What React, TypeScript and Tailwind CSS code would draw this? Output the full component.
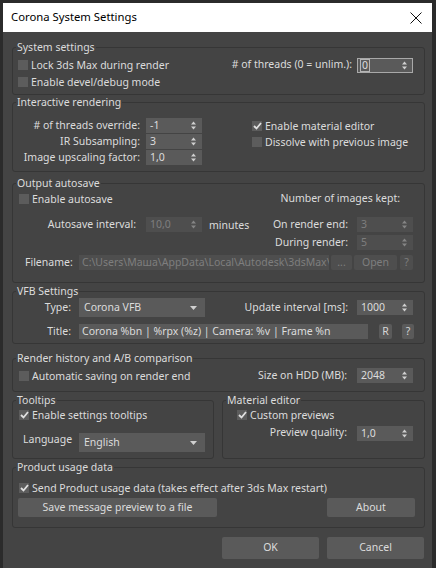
import type { ReactNode } from 'react'

const FONT = "font-['Noto_Sans','Open_Sans',sans-serif]"

function Spinner({ dim }: { dim?: boolean }) {
  const c = dim ? '#858585' : '#d0d0d0'
  return (
    <svg width="5" height="9" viewBox="0 0 5 9" className="shrink-0">
      <path d="M2.5 0.5 L5 3.5 L0 3.5 Z" fill={c} />
      <path d="M0 5.5 L5 5.5 L2.5 8.5 Z" fill={c} />
    </svg>
  )
}

function SpinBox({ value, disabled, focused }: { value: string; disabled?: boolean; focused?: boolean }) {
  return (
    <div
      className={`w-[56px] h-[15px] flex items-center justify-between shrink-0 ${
        disabled ? 'bg-[#4e4e4e] text-[#7e7e7e]' : 'bg-[#5a5a5a] text-[#dcdcdc]'
      } ${focused ? 'border border-[#a9a9a9] pl-[2px] pr-[5px]' : 'pl-[4px] pr-[6px]'}`}
    >
      {focused ? (
        <span className="border border-[#b5b5b5] leading-[11px] px-[1px] h-[13px]">{value}</span>
      ) : (
        <span className="leading-[15px]">{value}</span>
      )}
      <Spinner dim={disabled} />
    </div>
  )
}

function Dropdown({ value }: { value: string }) {
  return (
    <div className="w-[126px] h-[19px] bg-[#5a5a5a] flex items-center justify-between pl-[5px] pr-[8px] shrink-0">
      <span className="leading-[19px] text-[#dcdcdc]">{value}</span>
      <svg width="7" height="4" viewBox="0 0 7 4">
        <path d="M0 0 L7 0 L3.5 4 Z" fill="#d0d0d0" />
      </svg>
    </div>
  )
}

function Check({ checked, label, className = '' }: { checked?: boolean; label: string; className?: string }) {
  return (
    <div className={`flex items-center h-[16px] ${className}`}>
      <div className="w-[10px] h-[10px] bg-[#5c5c5c] flex items-center justify-center shrink-0">
        {checked && (
          <svg width="9" height="8" viewBox="0 0 9 8">
            <path d="M1 4 L3.5 6.5 L8 1" stroke="#e0e0e0" strokeWidth="1.8" fill="none" />
          </svg>
        )}
      </div>
      <span className="ml-[3px] leading-[16px] whitespace-nowrap">{label}</span>
    </div>
  )
}

function Group({ title, className = '', children }: { title: string; className?: string; children: ReactNode }) {
  return (
    <fieldset className={`border border-[#363636] rounded-[3px] ${className}`}>
      <legend className="ml-[3px] px-[1px] leading-[14px] h-[14px] whitespace-nowrap">{title}</legend>
      {children}
    </fieldset>
  )
}

function SmallBtn({ children, w, disabled }: { children: ReactNode; w: string; disabled?: boolean }) {
  return (
    <div
      className={`${w} h-[15px] rounded-[2px] flex items-center justify-center shrink-0 leading-[15px] ${
        disabled ? 'bg-[#4e4e4e] text-[#7e7e7e]' : 'bg-[#5a5a5a] text-[#d6d6d6]'
      }`}
    >
      {children}
    </div>
  )
}

export default function App() {
  return (
    <div className={`w-[436px] h-[568px] bg-[#2b2b2b] pt-[3px] pl-[3px] overflow-hidden ${FONT} text-[10.5px] text-[#dcdcdc]`}>
      <div className="w-[429px] h-[565px] bg-[#444444] flex flex-col">
        {/* title bar */}
        <div className="h-[29px] bg-white flex items-center justify-between pl-[8px] pr-[10px] shrink-0">
          <span className="text-[11.3px] text-black">Corona System Settings</span>
          <svg width="12" height="12" viewBox="0 0 12 12">
            <path d="M0.5 0.5 L11.5 11.5 M11.5 0.5 L0.5 11.5" stroke="#111" strokeWidth="1" />
          </svg>
        </div>

        <div className="pl-[9px] pr-[7px] flex flex-col">
          {/* System settings */}
          <Group title="System settings" className="mt-[8px] h-[55px]">
            <div className="flex items-center h-[16px] mt-[3px] pl-[5px] pr-[11px]">
              <Check label="Lock 3ds Max during render" />
              <span className="ml-auto mr-[5px] whitespace-nowrap"># of threads (0 = unlim.):</span>
              <SpinBox value="0" focused />
            </div>
            <Check label="Enable devel/debug mode" className="mt-[1px] pl-[5px]" />
          </Group>

          {/* Interactive rendering */}
          <Group title="Interactive rendering" className="h-[77px]">
            <div className="flex mt-[9px]">
              <div className="flex flex-col gap-[1px]">
                {[
                  ['# of threads override:', '-1'],
                  ['IR Subsampling:', '3'],
                  ['Image upscaling factor:', '1,0'],
                ].map(([l, v]) => (
                  <div key={l} className="flex items-center h-[15px]">
                    <span className="w-[127px] text-right whitespace-nowrap">{l}</span>
                    <div className="ml-[6px]">
                      <SpinBox value={v} />
                    </div>
                  </div>
                ))}
              </div>
              <div className="ml-[50px] flex flex-col">
                <Check checked label="Enable material editor" />
                <Check label="Dissolve with previous image" />
              </div>
            </div>
          </Group>

          {/* Output autosave */}
          <Group title="Output autosave" className="mt-[4px] h-[107px]">
            <div className="flex items-center mt-[1px] pl-[6px] pr-[24px]">
              <Check label="Enable autosave" />
              <span className="ml-auto">Number of images kept:</span>
            </div>
            <div className="flex items-center h-[15px] mt-[10px] pr-[11px]">
              <span className="w-[123px] text-right">Autosave interval:</span>
              <div className="ml-[10px]">
                <SpinBox value="10,0" disabled />
              </div>
              <span className="ml-[7px] pt-[3px]">minutes</span>
              <span className="ml-auto mr-[9px]">On render end:</span>
              <SpinBox value="3" disabled />
            </div>
            <div className="flex items-center justify-end h-[15px] mt-[3px] pr-[11px]">
              <span className="mr-[9px]">During render:</span>
              <SpinBox value="5" disabled />
            </div>
            <div className="flex items-center h-[15px] mt-[5px] pl-[12px]">
              <span className="w-[54px]">Filename:</span>
              <div className="w-[250px] h-[15px] bg-[#4e4e4e] text-[#7e7e7e] pl-[3px] leading-[15px] overflow-hidden whitespace-nowrap shrink-0">
                C:\Users\Маша\AppData\Local\Autodesk\3dsMax\2
              </div>
              <div className="ml-[2px]">
                <SmallBtn w="w-[21px]" disabled>...</SmallBtn>
              </div>
              <div className="ml-[2px]">
                <SmallBtn w="w-[43px]" disabled>Open</SmallBtn>
              </div>
              <div className="ml-[3px]">
                <SmallBtn w="w-[13px]" disabled>?</SmallBtn>
              </div>
            </div>
          </Group>

          {/* VFB Settings */}
          <Group title="VFB Settings" className="mt-[1px] h-[60px]">
            <div className="flex items-center h-[19px] pr-[11px]">
              <span className="w-[58px] text-right">Type:</span>
              <div className="ml-[8px]">
                <Dropdown value="Corona VFB" />
              </div>
              <span className="ml-auto mr-[9px]">Update interval [ms]:</span>
              <SpinBox value="1000" />
            </div>
            <div className="flex items-center h-[15px] mt-[7px]">
              <span className="w-[58px] text-right">Title:</span>
              <div className="ml-[8px] w-[289px] h-[15px] bg-[#5a5a5a] pl-[3px] leading-[15px] whitespace-nowrap overflow-hidden shrink-0">
                Corona %bn | %rpx (%z) | Camera: %v | Frame %n
              </div>
              <div className="ml-[11px]">
                <SmallBtn w="w-[13px]">R</SmallBtn>
              </div>
              <div className="ml-[10px]">
                <SmallBtn w="w-[12px]">?</SmallBtn>
              </div>
            </div>
          </Group>

          {/* Render history */}
          <Group title="Render history and A/B comparison" className="mt-[7px] h-[41px]">
            <div className="flex items-center h-[15px] mt-[3px] pl-[6px] pr-[11px]">
              <Check label="Automatic saving on render end" />
              <span className="ml-auto mr-[10px]">Size on HDD (MB):</span>
              <SpinBox value="2048" />
            </div>
          </Group>

          {/* Tooltips + Material editor */}
          <div className="flex gap-[8px] mt-[1px]">
            <Group title="Tooltips" className="w-[202px] h-[66px]">
              <Check checked label="Enable settings tooltips" className="pl-[6px]" />
              <div className="flex items-center h-[19px] mt-[10px] pl-[10px]">
                <span className="w-[56px] -mt-[5px]">Language</span>
                <Dropdown value="English" />
              </div>
            </Group>
            <Group title="Material editor" className="w-[203px] h-[66px]">
              <Check checked label="Custom previews" className="pl-[14px]" />
              <div className="flex items-center justify-end h-[14px] mt-[3px] pr-[11px]">
                <span className="mr-[10px]">Preview quality:</span>
                <SpinBox value="1,0" />
              </div>
            </Group>
          </div>

          {/* Product usage data */}
          <Group title="Product usage data" className="mt-[1px] h-[68px]">
            <Check checked label="Send Product usage data (takes effect after 3ds Max restart)" className="mt-[6px] pl-[6px]" />
            <div className="flex items-center mt-[2px] pl-[5px] pr-[9px]">
              <div className="w-[199px] h-[19px] bg-[#5a5a5a] rounded-[2px] flex items-center justify-center">
                Save message preview to a file
              </div>
              <div className="ml-auto w-[88px] h-[19px] bg-[#5a5a5a] rounded-[2px] flex items-center justify-center">
                About
              </div>
            </div>
          </Group>

          {/* OK / Cancel */}
          <div className="flex justify-end gap-[8px] mt-[9px] pr-[1px]">
            <div className="w-[97px] h-[22px] bg-[#5a5a5a] rounded-[2px] flex items-center justify-center">OK</div>
            <div className="w-[97px] h-[22px] bg-[#5a5a5a] rounded-[2px] flex items-center justify-center">Cancel</div>
          </div>
        </div>
      </div>
    </div>
  )
}
